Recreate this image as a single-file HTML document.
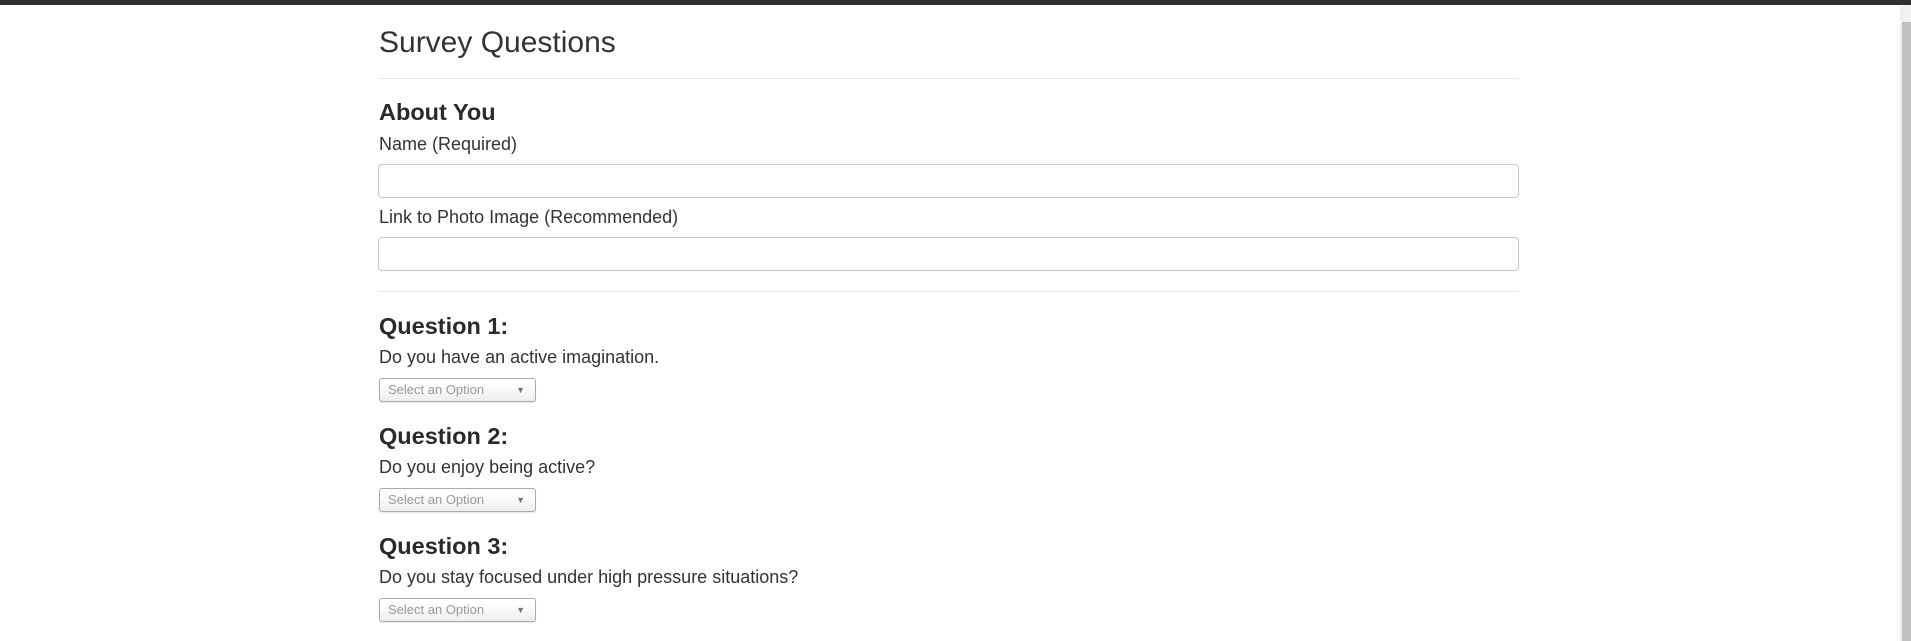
<!DOCTYPE html>
<html><head><meta charset="utf-8"><style>
body{margin:0;width:1911px;height:641px;overflow:hidden;background:#fff;font-family:"Liberation Sans",Arial,sans-serif;color:#333;position:relative}
.bar{position:absolute;left:0;top:0;width:1911px;height:5px;background:#2f3033}
.a{position:absolute;left:379px;white-space:nowrap;line-height:1}
.t{font-size:30px;color:#333}
.h{font-size:23.5px;font-weight:bold;color:#2a2a2a}
.l{font-size:18px}
.hr{position:absolute;left:378px;width:1141px;height:1px;background:#e8e8e8}
.in{position:absolute;left:378px;width:1139px;height:32px;border:1px solid #c8c8c8;border-radius:4px}
.sel{position:absolute;left:379px;width:155px;height:22px;border:1px solid #aaa;border-radius:3px;background:linear-gradient(#fff 20%,#eee);box-shadow:0 1px 1px rgba(0,0,0,.1);font-size:13px;color:#999;line-height:22px}
.sel span{position:absolute;left:8px}
.sel i{position:absolute;right:10px;top:0;font-style:normal;font-size:9px;color:#777}
.sb{position:absolute;left:1900px;top:5px;width:11px;height:636px;background:#f1f1f1}
.sb div{position:absolute;left:2px;top:17px;width:9px;height:619px;background:#c1c1c1}
</style></head><body>
<div class="bar"></div>
<div class="a t" style="top:28px">Survey Questions</div>
<div class="hr" style="top:78px"></div>
<div class="a h" style="top:101px">About You</div>
<div class="a l" style="top:135px">Name (Required)</div>
<div class="in" style="top:164px"></div>
<div class="a l" style="top:208px">Link to Photo Image (Recommended)</div>
<div class="in" style="top:237px"></div>
<div class="hr" style="top:291px"></div>
<div class="a h" style="top:315px">Question 1:</div>
<div class="a l" style="top:348px">Do you have an active imagination.</div>
<div class="sel" style="top:378px"><span>Select an Option</span><i>▼</i></div>
<div class="a h" style="top:425px">Question 2:</div>
<div class="a l" style="top:458px">Do you enjoy being active?</div>
<div class="sel" style="top:488px"><span>Select an Option</span><i>▼</i></div>
<div class="a h" style="top:535px">Question 3:</div>
<div class="a l" style="top:568px">Do you stay focused under high pressure situations?</div>
<div class="sel" style="top:598px"><span>Select an Option</span><i>▼</i></div>
<div class="sb"><div></div></div>
</body></html>
